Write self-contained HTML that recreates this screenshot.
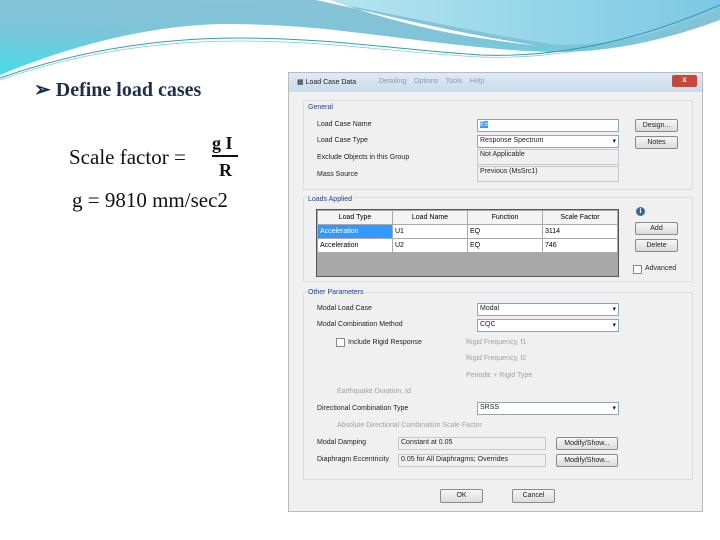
<!DOCTYPE html>
<html><head><meta charset="utf-8"><style>
body{margin:0;width:720px;height:540px;background:#fff;position:relative;overflow:hidden;font-family:"Liberation Sans",sans-serif}
.a{position:absolute}
.t{position:absolute;font-size:7px;color:#222;white-space:nowrap}
.g{color:#a0a0a0}
.f{position:absolute;background:#f0f0f0;border:1px solid #c8c8c8;box-sizing:border-box;font-size:7px;padding:1px 2px;color:#222}
.w{background:#fff;border-color:#8aa}
.b{position:absolute;background:linear-gradient(#f6f6f6,#dcdcdc);border:1px solid #8a8a8a;border-radius:2px;box-sizing:border-box;font-size:7px;text-align:center;line-height:11px;color:#222}
.grp{position:absolute;border:1px solid #dcdcdc;box-sizing:border-box}
.lg{position:absolute;font-size:7px;color:#1f3f8f;background:#f0f0f0;padding:0 1px}
.dd::after{content:"▾";position:absolute;right:2px;top:1px;font-size:7px}
.cb{position:absolute;width:7px;height:7px;border:1px solid #888;background:#fff}
td{border:1px solid #aaa;font-size:7px;padding:0 2px;height:13px}
</style></head><body>
<svg class="a" style="left:0;top:0" width="720" height="90">
<defs><linearGradient id="g1" x1="0" y1="1" x2="0.3" y2="0"><stop offset="0" stop-color="#45dce8"/><stop offset=".6" stop-color="#7ec4d8"/><stop offset="1" stop-color="#88c2d6"/></linearGradient>
<linearGradient id="g2" x1="0" x2="1"><stop offset="0" stop-color="#b6e6ee"/><stop offset="1" stop-color="#7cc8e4"/></linearGradient></defs>
<path d="M0 0H720V20C680 35 620 52 560 52C500 52 420 40 360 33C320 28 280 24 220 24C140 26 60 50 0 75Z" fill="url(#g1)"/>
<path d="M320 0H720V8C680 30 620 45 560 45C520 40 470 30 320 0Z" fill="url(#g2)"/>
<path d="M316 0C400 18 450 32 540 46C450 36 400 24 330 0Z" fill="#fff"/>
<path d="M0 78C80 50 160 38 240 38C330 38 400 50 480 55C560 58 640 40 720 5" stroke="#3a9ab5" stroke-width="1" fill="none"/>
<path d="M0 80C80 52 160 41 240 41C330 41 400 53 480 57C560 60 640 42 720 10" stroke="#7cc" stroke-width="0.7" fill="none"/>
</svg>
<div class="a" style="left:34px;top:77px;font:bold 20px 'Liberation Serif',serif;color:#1b2f4d">➢&nbsp;Define load cases</div>
<div class="a" style="left:62px;top:130px;width:204px;height:88px;font:21px 'Liberation Serif',serif;color:#111">
<span class="a" style="left:7px;top:15px">Scale factor =</span>
<span class="a" style="left:150px;top:3px;font-weight:bold;font-size:18px">g I</span>
<span class="a" style="left:150px;top:25px;width:26px;height:2px;background:#111"></span>
<span class="a" style="left:157px;top:30px;font-weight:bold;font-size:18px">R</span>
<span class="a" style="left:10px;top:58px">g = 9810 mm/sec2</span></div>
<div class="a" style="left:288px;top:72px;width:415px;height:440px;background:#f0f0f0;border:1px solid #bbb;box-sizing:border-box">
<div class="a" style="left:0;top:0;width:413px;height:19px;background:linear-gradient(#dfeaf4,#c9dbec)"></div>
<div class="t" style="left:8px;top:5px">▦ Load Case Data</div>
<div class="t" style="left:90px;top:5px;color:#8a9ab0">Detailing &nbsp;&nbsp; Options &nbsp;&nbsp; Tools &nbsp;&nbsp; Help</div>
<div class="a" style="left:383px;top:2px;width:25px;height:12px;background:#c9463d;border-radius:2px;color:#fff;font-size:8px;text-align:center;font-weight:bold">x</div>
</div>
<div class="grp" style="left:303px;top:100px;width:390px;height:90px"></div><div class="lg" style="left:307px;top:104px">General</div>
<div class="grp" style="left:303px;top:197px;width:390px;height:85px"></div><div class="lg" style="left:307px;top:196px">Loads Applied</div>
<div class="grp" style="left:303px;top:292px;width:390px;height:188px"></div><div class="lg" style="left:307px;top:289px">Other Parameters</div>
<div class="t" style="left:317px;top:121px">Load Case Name</div>
<div class="t" style="left:317px;top:137px">Load Case Type</div>
<div class="t" style="left:317px;top:154px">Exclude Objects in this Group</div>
<div class="t" style="left:317px;top:171px">Mass Source</div>
<div class="f w" style="left:477px;top:119px;width:142px;height:13px"><span style="background:#39f;color:#fff">Ex</span></div>
<div class="f w dd" style="left:477px;top:135px;width:142px;height:13px">Response Spectrum</div>
<div class="f" style="left:477px;top:149px;width:142px;height:16px">Not Applicable</div>
<div class="f" style="left:477px;top:166px;width:142px;height:16px">Previous (MsSrc1)</div>
<div class="b" style="left:635px;top:119px;width:43px;height:13px">Design...</div>
<div class="b" style="left:635px;top:136px;width:43px;height:13px">Notes</div>
<div class="a" style="left:316px;top:209px;width:303px;height:68px;background:#a8a8a8;border:1px solid #555;box-sizing:border-box">
<table style="border-collapse:collapse;width:301px;background:#fff"><tr style="background:#f4f4f4;text-align:center"><td>Load Type</td><td>Load Name</td><td>Function</td><td>Scale Factor</td></tr>
<tr><td style="background:#39f;color:#fff;width:70px">Acceleration</td><td style="width:70px">U1</td><td style="width:70px">EQ</td><td>3114</td></tr>
<tr><td>Acceleration</td><td>U2</td><td>EQ</td><td>746</td></tr></table></div>
<div class="a" style="left:636px;top:207px;width:9px;height:9px;border-radius:50%;background:#3b6a9a;color:#fff;font:bold 7px serif;text-align:center;line-height:9px">i</div>
<div class="b" style="left:635px;top:222px;width:43px;height:13px">Add</div>
<div class="b" style="left:635px;top:239px;width:43px;height:13px">Delete</div>
<div class="cb" style="left:633px;top:265px"></div><div class="t" style="left:645px;top:265px">Advanced</div>
<div class="t" style="left:317px;top:305px">Modal Load Case</div>
<div class="t" style="left:317px;top:321px">Modal Combination Method</div>
<div class="f w dd" style="left:477px;top:303px;width:142px;height:13px">Modal</div>
<div class="f w dd" style="left:477px;top:319px;width:142px;height:13px">CQC</div>
<div class="cb" style="left:336px;top:338px"></div><div class="t" style="left:348px;top:339px">Include Rigid Response</div>
<div class="t g" style="left:466px;top:339px">Rigid Frequency, f1</div>
<div class="t g" style="left:466px;top:355px">Rigid Frequency, f2</div>
<div class="t g" style="left:466px;top:372px">Periodic + Rigid Type</div>
<div class="t g" style="left:337px;top:388px">Earthquake Duration, td</div>
<div class="t" style="left:317px;top:405px">Directional Combination Type</div>
<div class="f w dd" style="left:477px;top:402px;width:142px;height:13px">SRSS</div>
<div class="t g" style="left:337px;top:422px">Absolute Directional Combination Scale Factor</div>
<div class="t" style="left:317px;top:439px">Modal Damping</div>
<div class="t" style="left:317px;top:456px">Diaphragm Eccentricity</div>
<div class="f" style="left:398px;top:437px;width:148px;height:13px">Constant at 0.05</div>
<div class="f" style="left:398px;top:454px;width:148px;height:13px">0.05 for All Diaphragms; Overrides</div>
<div class="b" style="left:556px;top:437px;width:62px;height:13px">Modify/Show...</div>
<div class="b" style="left:556px;top:454px;width:62px;height:13px">Modify/Show...</div>
<div class="b" style="left:440px;top:489px;width:43px;height:14px">OK</div>
<div class="b" style="left:512px;top:489px;width:43px;height:14px">Cancel</div>
</body></html>
